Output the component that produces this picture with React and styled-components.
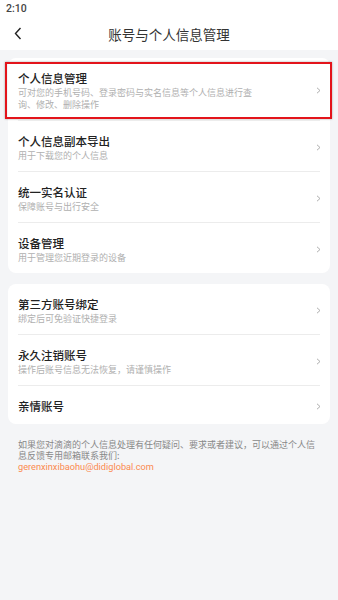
import React from "react";
import styled, { createGlobalStyle } from "styled-components";

const GlobalStyle = createGlobalStyle`
  html, body {
    margin: 0;
    padding: 0;
    background: #f4f5f7;
  }
  body {
    font-family: "Noto Sans CJK SC", Roboto, "Noto Sans", sans-serif;
  }
`;

const Page = styled.div`
  width: 338px;
  min-height: 600px;
  background: #f4f5f7;
  display: flex;
  flex-direction: column;
`;

const Top = styled.div`
  background: #fff;
  display: flex;
  flex-direction: column;
`;

const StatusBar = styled.div`
  height: 17px;
  padding: 0 6px;
  display: flex;
  align-items: center;
  font-family: Roboto, "Liberation Sans", sans-serif;
  font-size: 10.5px;
  font-weight: 500;
  color: #444;
`;

const NavBar = styled.div`
  height: 33px;
  display: grid;
  grid-template-columns: 40px 1fr 40px;
  align-items: center;
`;

const Back = styled.div`
  display: flex;
  align-items: center;
  padding-left: 14px;
`;

const Title = styled.div`
  text-align: center;
  font-size: 13.5px;
  color: #333;
`;

const Body = styled.div`
  padding: 8px 8px 0;
  display: flex;
  flex-direction: column;
  gap: 11px;
`;

const Card = styled.div`
  background: #fff;
  border-radius: 8px;
  display: flex;
  flex-direction: column;
`;

const Row = styled.div`
  position: relative;
  display: flex;
  align-items: center;
  padding: 11px 10px 9px;
  & + & {
    border-top: 1px solid transparent;
  }
  & + &::before {
    content: "";
    position: absolute;
    top: -1px;
    left: 10px;
    right: 10px;
    height: 1px;
    background: #ececec;
  }
`;

const Texts = styled.div`
  flex: 1;
  display: flex;
  flex-direction: column;
`;

const RowTitle = styled.div`
  font-size: 11.5px;
  line-height: 18px;
  font-weight: 500;
  color: #222;
`;

const RowSub = styled.div`
  font-size: 9px;
  line-height: 12px;
  color: #b0b0b0;
  max-width: 238px;
`;

const Chevron = styled.div`
  width: 12px;
  display: flex;
  justify-content: center;
  margin-right: -4px;
`;

const Highlight = styled.div`
  position: absolute;
  top: 4px;
  bottom: 1px;
  left: -3px;
  right: -2px;
  border: 2px solid #e3141b;
  box-shadow: 0 0 2px rgba(0, 0, 0, 0.35);
  pointer-events: none;
`;

const Footer = styled.div`
  padding: 16px 22px 13px 18px;
  font-size: 9px;
  line-height: 10.5px;
  color: #888;
`;

const Email = styled.div`
  font-family: Roboto, "Liberation Sans", sans-serif;
  color: #fb8a4f;
  font-size: 9.2px;
  line-height: 11px;
`;

const Arrow = () => (
  <svg width="5" height="7" viewBox="0 0 5 7">
    <path d="M1 0.8 L4 3.5 L1 6.2" fill="none" stroke="#a6a6a6" strokeWidth="0.9" />
  </svg>
);

const groups = [
  [
    {
      title: "个人信息管理",
      sub: "可对您的手机号码、登录密码与实名信息等个人信息进行查询、修改、删除操作",
      marked: true,
    },
    { title: "个人信息副本导出", sub: "用于下载您的个人信息" },
    { title: "统一实名认证", sub: "保障账号与出行安全" },
    { title: "设备管理", sub: "用于管理您近期登录的设备" },
  ],
  [
    { title: "第三方账号绑定", sub: "绑定后可免验证快捷登录" },
    { title: "永久注销账号", sub: "操作后账号信息无法恢复，请谨慎操作" },
    { title: "亲情账号" },
  ],
];

export default function App() {
  return (
    <Page>
      <GlobalStyle />
      <Top>
        <StatusBar>2:10</StatusBar>
        <NavBar>
          <Back>
            <svg width="8" height="13" viewBox="0 0 8 13">
              <path d="M6.5 1 L1.5 6.5 L6.5 12" fill="none" stroke="#222" strokeWidth="1.4" />
            </svg>
          </Back>
          <Title>账号与个人信息管理</Title>
          <div />
        </NavBar>
      </Top>
      <Body>
        {groups.map((items, gi) => (
          <Card key={gi}>
            {items.map((it) => (
              <Row key={it.title}>
                <Texts>
                  <RowTitle>{it.title}</RowTitle>
                  {it.sub && <RowSub>{it.sub}</RowSub>}
                </Texts>
                <Chevron>
                  <Arrow />
                </Chevron>
                {it.marked && <Highlight />}
              </Row>
            ))}
          </Card>
        ))}
      </Body>
      <Footer>
        如果您对滴滴的个人信息处理有任何疑问、要求或者建议，可以通过个人信息反馈专用邮箱联系我们:
        <Email>gerenxinxibaohu@didiglobal.com</Email>
      </Footer>
    </Page>
  );
}
